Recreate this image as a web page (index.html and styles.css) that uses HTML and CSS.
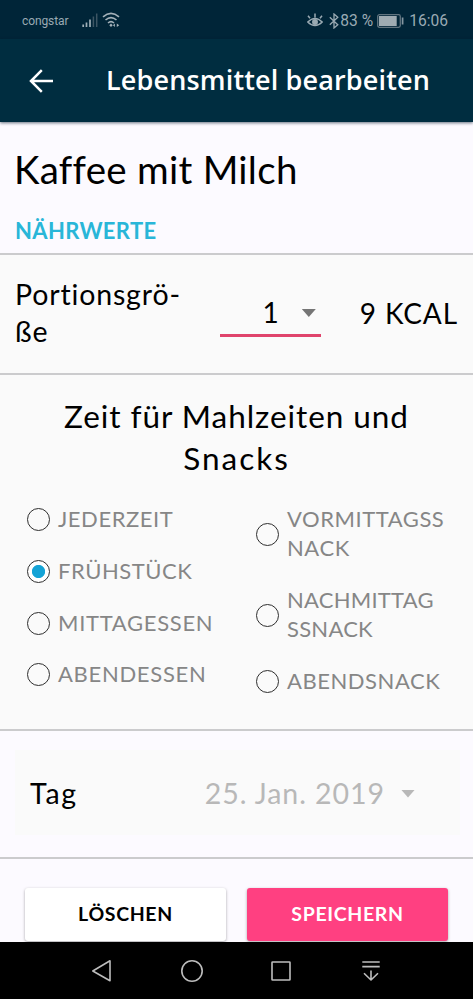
FILE: index.html
```html
<!DOCTYPE html>
<html lang="de">
<head>
<meta charset="utf-8">
<title>Lebensmittel bearbeiten</title>
<link rel="stylesheet" href="styles.css">
</head>
<body>
<div class="status">
  <span class="carrier">congstar</span>
  <svg class="signal" width="16" height="15" viewBox="0 0 16 15"><path d="M1.2 14v-2.5M4.5 14V9.5M8 14V6.5" stroke="#9fb0b8" stroke-width="1.7"/><path d="M11.4 14V3.5M14.7 14V.5" stroke="#3d5664" stroke-width="1.5"/></svg>
  <svg class="wifi" width="18" height="16" viewBox="0 0 18 16" fill="none" stroke="#a3b1b9" stroke-width="1.6"><path d="M1 4.8Q9-2.2 17 4.8M3.5 8Q9 3.2 14.5 8M6 11Q9 8.4 12 11"/><path d="M9 11.5l1.7 1.8L9 15l-1.7-1.7zM12.9 11.4v3.6l-2-1.8zM14.8 11.4v3.6l2.4-1.8z" fill="#a3b1b9" stroke="none"/></svg>
  <span class="spacer"></span>
  <svg class="eye" width="16" height="15" viewBox="0 0 16 15" fill="none" stroke="#9aaab3" stroke-width="1.5"><path d="M.8 9Q8 1.8 15.2 9 8 16.2.8 9zM1 2.8l2 2.5M8 .5v4M15 2.8l-2 2.5"/><circle cx="8" cy="9" r="2.2" fill="#9aaab3"/></svg>
  <svg class="bluetooth" width="10" height="16" viewBox="0 0 10 16" fill="none" stroke="#9aaab3" stroke-width="1.3"><path d="M.8 4.2l8 7.5L5 15V1l3.8 3.3-8 7.5"/></svg>
  <span class="percent">83 %</span>
  <svg class="battery" width="27" height="14" viewBox="0 0 27 14"><rect x=".7" y=".7" width="22.6" height="12.6" rx="1.8" fill="none" stroke="#60747f" stroke-width="1.3"/><rect x="2" y="2" width="17.7" height="10" fill="#9eabb2"/><path d="M25.6 3.5v7" stroke="#8496a0" stroke-width="1.7"/></svg>
  <span class="clock">16:06</span>
</div>
<header class="appbar">
  <svg width="24" height="24" viewBox="0 0 24 24" fill="none" stroke="#fff" stroke-width="2.5"><path d="M24 12H2M12.8 1.2L2 12l10.8 10.8"/></svg>
  <h1>Lebensmittel bearbeiten</h1>
</header>
<main>
  <section class="food">
    <div class="food-name">Kaffee mit Milch</div>
    <div class="nutrition">NÄHRWERTE</div>
  </section>
  <section class="portion">
    <div class="portion-label">Portionsgrö-<br>ße</div>
    <div class="picker"><span>1</span><i class="caret"></i></div>
    <div class="kcal">9 KCAL</div>
  </section>
  <section class="meals">
    <h2>Zeit für Mahlzeiten und<br><span>Snacks</span></h2>
    <div class="options">
      <div>
        <div class="option"><i class="radio"></i><span>JEDERZEIT</span></div>
        <div class="option"><i class="radio on"></i><span>FRÜHSTÜCK</span></div>
        <div class="option wide"><i class="radio"></i><span>MITTAGESSEN</span></div>
        <div class="option wide"><i class="radio"></i><span>ABENDESSEN</span></div>
      </div>
      <div>
        <div class="option"><i class="radio"></i><span>VORMITTAGSS<br>NACK</span></div>
        <div class="option narrow"><i class="radio"></i><span>NACHMITTAG<br>SSNACK</span></div>
        <div class="option"><i class="radio"></i><span>ABENDSNACK</span></div>
      </div>
    </div>
  </section>
  <section class="day">
    <div class="day-card"><span class="day-label">Tag</span><span class="date">25. Jan. 2019</span><i class="caret"></i></div>
  </section>
  <section class="actions">
    <div class="btn delete">LÖSCHEN</div>
    <div class="btn save">SPEICHERN</div>
  </section>
</main>
<nav class="navbar">
  <svg width="24" height="24" viewBox="0 0 24 24"><path d="M20 1.8v20L2.8 12z"/></svg>
  <svg width="24" height="24" viewBox="0 0 24 24"><circle cx="12" cy="12" r="10.2"/></svg>
  <svg width="24" height="24" viewBox="0 0 24 24"><rect x="3" y="3" width="18" height="18" rx=".6"/></svg>
  <svg width="24" height="24" viewBox="0 0 24 24"><path d="M3.3 3h17.4M3.3 7.6h17.4M12 11.5v9.2M5 14.2l7 6.8 7-6.8"/></svg>
</nav>
</body>
</html>
```
FILE: styles.css
```css
* { box-sizing: border-box; }
body {
  margin: 0;
  width: 473px;
  height: 999px;
  display: flex;
  flex-direction: column;
  overflow: hidden;
  font-family: Lato, sans-serif;
  color: #000;
  background: #fcfaff;
}
svg { display: block; flex: none; }

.status {
  height: 39px;
  flex: none;
  display: flex;
  align-items: center;
  padding: 2px 25px 0 22px;
  background: #002538;
  color: #9aaab3;
  font-family: Roboto, sans-serif;
  white-space: nowrap;
}
.carrier { font-size: 12px; width: 60px; letter-spacing: -.1px; }
.wifi { margin: -2px 0 0 4px; }
.spacer { flex: 1; }
.eye { margin-right: 1px; }
.bluetooth { margin: 0 1px 0 5px; }
.percent, .clock { font-size: 15.6px; }
.battery { margin: 0 5px 0 4px; }

.appbar {
  height: 83px;
  flex: none;
  display: flex;
  align-items: center;
  padding-left: 29px;
  background: #002d40;
  color: #fff;
  box-shadow: 0 1px 3px rgba(0, 20, 40, .6);
}
h1 {
  margin: -1px 0 1px 53px;
  font: 600 27px/36px "Open Sans", sans-serif;
  letter-spacing: .15px;
  white-space: nowrap;
}

main { flex: 1; min-height: 0; }
section { border-bottom: 2px solid #cbcbcd; }

.food { height: 133px; padding: 23px 15px 0; }
.food-name { font-size: 38.5px; line-height: 48px; letter-spacing: .27px; margin-left: -1px; }
.nutrition {
  margin-top: 25px;
  font-size: 22px;
  line-height: 26px;
  font-weight: 700;
  letter-spacing: .35px;
  color: #29b6d8;
}

.portion {
  height: 120px;
  display: flex;
  align-items: flex-start;
  padding: 21px 15px 0;
  background: #fafafa;
}
.portion-label { width: 205px; font-size: 28.5px; line-height: 37px; letter-spacing: .85px; }
.picker {
  width: 101px;
  height: 61px;
  display: flex;
  align-items: center;
  justify-content: flex-end;
  padding: 14px 5px 0 0;
  gap: 23px;
  border-bottom: 3px solid #e0446c;
  font-size: 28px;
}
.caret {
  width: 14px;
  height: 8px;
  background: #757575;
  clip-path: polygon(0 0, 100% 0, 50% 100%);
}
.picker .caret { margin-top: 2px; }
.kcal { margin: 19px 0 0 39px; font-size: 28px; line-height: 37px; letter-spacing: .9px; white-space: nowrap; }

.meals { height: 356px; background: #fafafa; padding-top: 20px; }
h2 {
  margin: 0;
  text-align: center;
  font-size: 31.5px;
  line-height: 42px;
  font-weight: 400;
  letter-spacing: .95px;
}
h2 span { letter-spacing: 2px; }
.options { display: flex; margin-top: 15px; padding-left: 27px; }
.options > div:first-child { width: 229px; }
.option {
  display: flex;
  align-items: center;
  gap: 8px;
  padding: 11.35px 0;
  font-size: 22px;
  line-height: 29px;
  letter-spacing: .55px;
  color: #868686;
}
.wide { letter-spacing: .7px; }
.narrow { letter-spacing: .25px; }
.option span { margin: -1px 0 1px; }
.radio {
  width: 23px;
  height: 23px;
  flex: none;
  border: 1.5px solid #2e2e2e;
  border-radius: 50%;
}
.on { background: radial-gradient(circle, #14a3d6 6.2px, #fff 7px); }

.day { height: 128px; padding: 19px 13px 0 15px; }
.day-card { height: 85px; display: flex; align-items: center; padding: 0 45px 0 15px; background: #fafafa; font-size: 28.5px; }
.day-label { flex: 1; letter-spacing: 1.8px; }
.date { color: #b8b8b8; letter-spacing: .95px; margin-right: 16px; }
.day .caret { background: #b8b8b8; margin-top: 2px; }

.actions { display: flex; gap: 21px; padding: 29px 25px 0; border: 0; }
.btn {
  flex: 1;
  height: 53px;
  border-radius: 3px;
  text-align: center;
  font-size: 19.5px;
  line-height: 52px;
  font-weight: 700;
  letter-spacing: .65px;
  box-shadow: 0 1px 3px rgba(0, 0, 0, .35);
}
.delete { background: #fff; }
.save { background: #ff4081; color: #fff; }

.navbar {
  position: relative;
  height: 57px;
  flex: none;
  display: flex;
  justify-content: center;
  align-items: center;
  gap: 65.5px;
  background: #000;
}
.navbar svg { fill: none; stroke: #bdbdbd; stroke-width: 1.6; stroke-linejoin: round; }
```
